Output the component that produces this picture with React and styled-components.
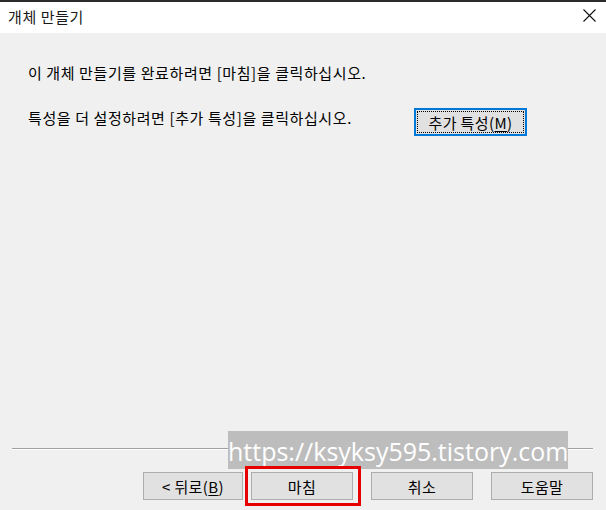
import styled, { createGlobalStyle } from 'styled-components'

const GlobalStyle = createGlobalStyle`
  html, body {
    margin: 0;
    padding: 0;
    background: #f0f0f0;
  }
  body {
    font-family: "Noto Sans CJK KR", "Noto Sans", sans-serif;
    color: #000;
  }
`;

const Window = styled.div`
  position: relative;
  width: 606px;
  height: 510px;
  display: flex;
  flex-direction: column;
  background: #f0f0f0;
  overflow: hidden;
`;

const TitleBar = styled.div`
  height: 31px;
  border-top: 2px solid #2b2b2b;
  background: #fff;
  display: flex;
  align-items: center;
  justify-content: space-between;
  padding: 0 10px 0 8px;
`;

const Title = styled.span`
  font-size: 15px;
  letter-spacing: 0.6px;
  color: #1a1a1a;
  margin-top: -2px;
`;

const CloseIcon = styled.svg`
  width: 13px;
  height: 13px;
  margin-top: -4px;
`;

const Body = styled.div`
  flex: 1;
  padding: 31px 28px 0;
  display: flex;
  flex-direction: column;
`;

const Message = styled.p`
  margin: 0;
  font-size: 15px;
  letter-spacing: 0.6px;
  line-height: 18px;
`;

const PropRow = styled.div`
  display: flex;
  align-items: center;
  margin-top: 26px;
`;

const PropText = styled(Message)`
  width: 386px;
  margin-top: -8px;
`;

const Button = styled.button`
  width: ${p => p.$w || 102}px;
  height: 28px;
  box-sizing: border-box;
  background: #e1e1e1;
  border: 1px solid #adadad;
  font-family: inherit;
  font-size: 15px;
  letter-spacing: 0.4px;
  color: #000;
  padding: 0;
  display: flex;
  align-items: center;
  justify-content: center;
`;

const FocusButton = styled(Button)`
  border: 2px solid #0078d7;
  position: relative;
  &::after {
    content: '';
    position: absolute;
    inset: 1px;
    border: 1px dotted #000;
  }
`;

const Key = styled.span`
  text-decoration: underline;
  text-underline-offset: 2px;
`;

const Footer = styled.div`
  padding: 0 13px 10px 12px;
`;

const Separator = styled.div`
  height: 1px;
  background: #a0a0a0;
  border-bottom: 1px solid #fff;
`;

const ButtonRow = styled.div`
  display: flex;
  justify-content: flex-end;
  align-items: center;
  gap: 18px;
  margin-top: 22px;
`;

const Pair = styled.div`
  display: flex;
  gap: 8px;
  align-items: center;
`;

const Highlight = styled.div`
  position: relative;
  z-index: 2;
  border: 3px solid #e60000;
  padding: 3px 5px 3px 3px;
  margin: -6px -8px -6px -6px;
  display: flex;
`;

const Watermark = styled.div`
  position: absolute;
  z-index: 1;
  left: 228px;
  top: 431px;
  width: 340px;
  height: 38px;
  background: #bdbdbd;
  color: #fff;
  font-family: "Open Sans", "Liberation Sans", sans-serif;
  font-size: 25px;
  line-height: 40px;
  text-align: center;
  white-space: nowrap;
`;

export default function App() {
  return <>
    <GlobalStyle />
    <Window>
      <TitleBar>
        <Title>개체 만들기</Title>
        <CloseIcon viewBox="0 0 13 13">
          <path d="M0.5 0.5 L12.5 12.5 M12.5 0.5 L0.5 12.5" stroke="#111" strokeWidth="1.1" fill="none" />
        </CloseIcon>
      </TitleBar>
      <Body>
        <Message>이 개체 만들기를 완료하려면 [마침]을 클릭하십시오.</Message>
        <PropRow>
          <PropText>특성을 더 설정하려면 [추가 특성]을 클릭하십시오.</PropText>
          <FocusButton $w={113}>추가 특성(<Key>M</Key>)</FocusButton>
        </PropRow>
      </Body>
      <Footer>
        <Separator />
        <ButtonRow>
          <Pair>
            <Button $w={100}>&lt; 뒤로(<Key>B</Key>)</Button>
            <Highlight>
              <Button>마침</Button>
            </Highlight>
          </Pair>
          <Button>취소</Button>
          <Button>도움말</Button>
        </ButtonRow>
      </Footer>
      <Watermark>https://ksyksy595.tistory.com</Watermark>
    </Window>
  </>
}
